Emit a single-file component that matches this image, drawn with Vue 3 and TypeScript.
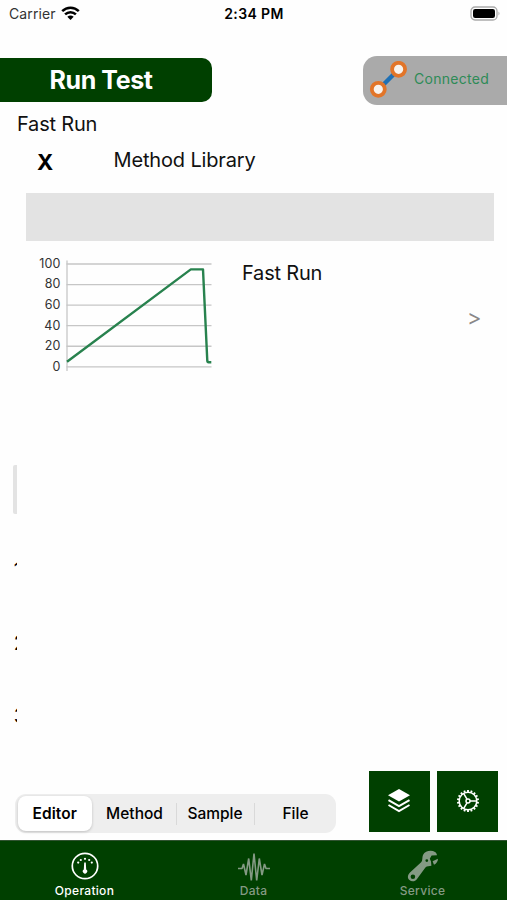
<script setup lang="ts">
interface Tab { id: string; label: string }

const ticks: number[] = [100, 80, 60, 40, 20, 0]
const steps: number[] = [1, 2, 3]
const modes: string[] = ['Editor', 'Method', 'Sample', 'File']
const activeMode = 'Editor'
const tabs: Tab[] = [
  { id: 'operation', label: 'Operation' },
  { id: 'data', label: 'Data' },
  { id: 'service', label: 'Service' },
]
const activeTab = 'operation'
const teeth: number[] = Array.from({ length: 18 }, (_, i) => i * 20)
const tickY = (v: number): number => 105.8 - v * 1.028
</script>

<template>
  <main class="screen">
    <div class="status">
      <div class="carrier">
        <span>Carrier</span>
        <svg width="19" height="15" viewBox="0 0 19 15">
          <g fill="none" stroke="#000" stroke-width="2.5">
            <path d="M1.2 5.2C5.9 .5 13.1 .5 17.8 5.2" />
            <path d="M4.1 8.4C7.2 5.4 11.8 5.4 14.9 8.4" />
          </g>
          <path d="M6.3 10.8Q9.5 8.2 12.7 10.8L9.5 14Z" />
        </svg>
      </div>
      <span class="time">2:34 PM</span>
      <svg class="battery" width="31" height="16" viewBox="0 0 31 16">
        <rect x="1" y="1" width="26" height="13" rx="4" fill="#fff" stroke="#aaa" stroke-width="1.3" />
        <rect x="3" y="3" width="22" height="9" rx="2.2" />
        <path d="M28.5 5.5q2 2 0 4z" fill="#aaa" />
      </svg>
    </div>

    <header class="top">
      <h1 class="run">Run Test</h1>
      <div class="link">
        <svg width="38" height="38" viewBox="0 0 38 38">
          <path d="M9.5 28.5L29.5 8.5" stroke="#1f70b5" stroke-width="4.4" />
          <g fill="#f8f3ee" stroke="#e27529" stroke-width="3.8">
            <circle cx="9.3" cy="28.3" r="6.5" />
            <circle cx="29.6" cy="8.3" r="6.5" />
          </g>
        </svg>
        <span>Connected</span>
      </div>
    </header>

    <p class="name">Fast Run</p>
    <div class="library">
      <b class="close">X</b>
      <span class="title">Method Library</span>
    </div>
    <div class="search"></div>

    <section class="method">
      <svg class="chart" width="180" height="120" viewBox="0 0 180 120">
        <g stroke="#c6c6c6" stroke-width="1.3">
          <path v-for="t in ticks" :key="t" :d="`M34.5 ${tickY(t)}H179.5`" />
          <path d="M35 -.5V110" />
        </g>
        <text v-for="t in ticks" :key="t" class="tick" x="28.5" :y="tickY(t) + 3.9" text-anchor="end">{{ t }}</text>
        <path d="M35 100.7L158.8 8.4H171L175.3 100Q175.5 101.2 176.5 101.2H179.3" fill="none" stroke="#28824e" stroke-width="2.4" stroke-linejoin="round" />
      </svg>
      <span class="method-name">Fast Run</span>
      <span class="more">&gt;</span>
    </section>

    <aside class="behind">
      <div class="behind-bar"></div>
      <div v-for="s in steps" :key="s" class="step">{{ s }}</div>
    </aside>

    <div class="controls">
      <div class="segments">
        <span v-for="m in modes" :key="m" class="segment" :class="[m.toLowerCase(), { selected: m === activeMode }]">{{ m }}</span>
      </div>
      <div class="actions">
        <div class="action">
          <svg width="24" height="26" viewBox="0 0 24 26">
            <path d="M12 1L23 7.2L12 13.4L1 7.2Z" fill="#fff" />
            <path d="M1.5 12.2L12 18.1L22.5 12.2M1.5 17L12 23L22.5 17" fill="none" stroke="#fff" stroke-width="2" />
          </svg>
        </div>
        <div class="action">
          <svg width="24" height="24" viewBox="-12 -12 24 24">
            <g fill="none" stroke="#fff" stroke-width="1.5">
              <circle r="8.8" />
              <circle r="2" />
              <path d="M2 0H8.8M-1 -1.8L-4.4 -7.6M-1 1.8L-4.4 7.6" />
              <path v-for="a in teeth" :key="a" d="M0 -9V-11" stroke-width="1.9" :transform="`rotate(${a})`" />
            </g>
          </svg>
        </div>
      </div>
    </div>

    <nav class="tabs">
      <div v-for="t in tabs" :key="t.id" class="tab" :class="{ active: t.id === activeTab }">
        <svg v-if="t.id === 'operation'" width="34" height="34" viewBox="-17 -17 34 34">
          <circle r="12.7" fill="none" stroke="currentColor" stroke-width="1.7" />
          <g fill="currentColor">
            <circle cx="-6.8" cy="-3.4" r="1.1" /><circle cx="-4.2" cy="-6" r="1.1" />
            <circle cx="0" cy="-7.2" r="1.1" /><circle cx="4.2" cy="-6" r="1.1" />
            <circle cx="6.8" cy="-3.4" r="1.1" />
            <path d="M-.8 -3.5H.8L1.2 3.4A2.2 2.2 0 1 1 -1.2 3.4Z" />
          </g>
        </svg>
        <svg v-else-if="t.id === 'data'" width="34" height="34" viewBox="-17 -17 34 34">
          <path d="M-16 2.5H-12L-10.5 -2L-8 9L-5.3 -7.5L-2.7 14.5L0 -12.5L2.7 14.5L5.3 -7.5L8 9L10.5 -2L12 2.5H16" fill="none" stroke="currentColor" stroke-width="1.6" stroke-linejoin="bevel" />
        </svg>
        <svg v-else width="34" height="34" viewBox="0 0 34 34">
          <path fill="currentColor" fill-rule="evenodd" d="M29 3C25.5 .8 19 1.8 17 6C16 8.5 16.8 11 15.4 13L4 23.4C1.4 25.7 1.3 29 3.4 31C5.8 33.1 9.3 32.4 11 29.9L19.4 18.5C21 16.8 23.5 17.5 25.4 16.8L25 12.5L23.8 9.8L25.6 6.4L31 6.2C30.8 4.8 30 3.7 29 3ZM19.4 11.6A1.4 1.4 0 1 0 22.2 11.6A1.4 1.4 0 1 0 19.4 11.6ZM4.6 27.7A2.3 2.3 0 1 0 9.2 27.7A2.3 2.3 0 1 0 4.6 27.7Z" />
          <path fill="currentColor" d="M26.6 12.2L31.9 9.8C32 12.4 30.4 14.8 28 15.8Z" />
        </svg>
        <span>{{ t.label }}</span>
      </div>
    </nav>
  </main>
</template>

<style>
body { margin: 0; background: #fff; }
</style>

<style scoped>
.screen {
  width: 507px; height: 900px; overflow: hidden; display: flex; flex-direction: column;
  background: #fefefe; color: #111; font-family: Inter, "Liberation Sans", sans-serif;
}
svg { display: block; flex: none; }
.status {
  height: 28px; flex: none; display: grid; grid-template-columns: 1fr auto 1fr; align-items: center;
  padding: 0 6px 0 9px; box-sizing: border-box; font-size: 14px; line-height: 28px;
}
.carrier { display: flex; align-items: center; gap: 6px; color: #333; letter-spacing: 0.1px; }
.carrier svg { margin-top: -2px; margin-left: -1px; }
.time { font-weight: 600; color: #000; letter-spacing: 0.4px; margin-right: 2px; }
.battery { justify-self: end; margin-top: -1px; }
.top { height: 49px; margin-top: 28px; flex: none; display: flex; justify-content: space-between; align-items: flex-start; }
.run {
  box-sizing: border-box; width: 212.4px; height: 44px; margin: 2.2px 0 0; padding-left: 49.5px;
  border-radius: 0 10px 10px 0; background: #004000; color: #fff; font-size: 25px; line-height: 45px; font-weight: 700; letter-spacing: -0.4px;
}
.link {
  box-sizing: border-box; width: 144.5px; height: 48.5px; padding-left: 6.5px; display: flex; gap: 7px;
  border-radius: 14px 0 0 14px; background: #aaa; color: #2e8b57; font-size: 14px; line-height: 45px; letter-spacing: 0.3px;
}
.link svg { margin-top: 5px; }
.name { height: 38px; margin: 0; padding-left: 17px; flex: none; font-size: 20px; line-height: 38px; letter-spacing: -0.2px; }
.library { height: 50px; flex: none; display: flex; padding-left: 37px; line-height: 34px; font-size: 20px; letter-spacing: -0.15px; }
.close { width: 76.5px; font-size: 22px; line-height: 38px; color: #000; }
.search { height: 48px; flex: none; margin: 0 12.6px 0 26.4px; background: #e3e3e3; }
.method { height: 125px; margin-top: 20px; flex: none; display: flex; padding-left: 31.5px; }
.chart { overflow: visible; }
.tick { font-size: 12.5px; fill: #333; letter-spacing: 0.1px; }
.method-name { width: 225px; margin-left: 30.5px; font-size: 20px; line-height: 25px; letter-spacing: -0.2px; }
.more { font-size: 22px; line-height: 23px; margin-top: 45px; color: #888; }
.behind { width: 4px; height: 305px; margin: 79px 0 0 13px; flex: none; overflow: hidden; }
.behind-bar { height: 49px; background: #e3e3e3; border-radius: 2px 0 0 2px; }
.step { height: 73px; line-height: 25px; font-size: 20px; color: #000; text-indent: 0.8px; }
.behind-bar + .step { margin-top: 44px; }
.controls { flex: none; height: 70px; display: flex; justify-content: space-between; padding: 0 9px 0 15px; align-items: flex-start; }
.segments {
  box-sizing: border-box; width: 321px; height: 39px; margin-top: 24px; padding: 2px 0 2px 3px;
  display: grid; grid-template-columns: 73.5px 84px 79px 82px; border-radius: 11px; background: #eee;
}
.segment { box-sizing: border-box; text-align: center; font-size: 15.5px; line-height: 35px; font-weight: 500; color: #000; }
.selected { background: #fff; border-radius: 8px; font-weight: 600; letter-spacing: 0.1px; box-shadow: 0 1px 3px #0003; }
.method.segment { height: auto; margin: 0; padding: 0 0 0 2px; display: block; }
.sample { background: linear-gradient(#d9d9d9, #d9d9d9) left center / 1px 22px no-repeat, linear-gradient(#d9d9d9, #d9d9d9) right center / 1px 22px no-repeat; }
.actions { display: flex; gap: 7.5px; margin-top: 0.5px; }
.action { width: 61px; height: 61px; display: grid; place-items: center; background: #004000; }
.tabs {
  box-sizing: border-box; height: 60px; flex: none; display: grid; grid-template-columns: 169px 169px 169px;
  border-top: 1px solid #315331; background: #004000;
}
.tab { display: flex; flex-direction: column; align-items: center; padding-top: 8px; color: #849a84; font-size: 12px; font-weight: 500; line-height: 16px; letter-spacing: 0.3px; }
.active { color: #fff; }
</style>
